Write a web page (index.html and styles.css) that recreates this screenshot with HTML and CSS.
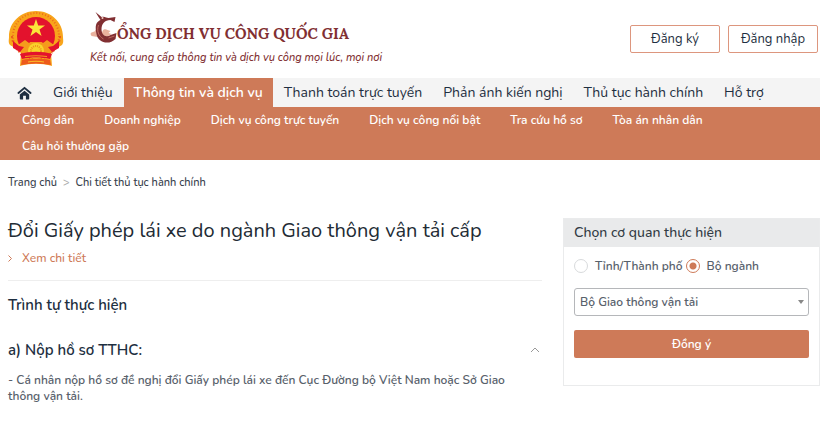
FILE: index.html
```html
<!DOCTYPE html>
<html lang="vi">
<head>
<meta charset="utf-8">
<meta name="viewport" content="width=device-width, initial-scale=1">
<title>Cổng Dịch vụ công Quốc gia</title>
<link rel="stylesheet" href="styles.css">
</head>
<body>
<header class="header">
  <a class="brand" href="#">
    <svg class="emblem" viewBox="0 0 56 58" aria-hidden="true">
      <path fill="#f8a51b" d="M28 1C13 1 1 12 1 27c0 3-1 5 1 8l5 3 6 5-1 13c10-3 22-3 32 0l-1-13 6-5 5-3c2-3 1-5 1-8C55 12 43 1 28 1z"/>
      <circle cx="28" cy="26" r="23" fill="none" stroke="#ee6a1c" stroke-width="2" stroke-dasharray="1 2"/>
      <path fill="none" stroke="#ed5c1c" stroke-width="2" stroke-dasharray="2 2" d="M4 26c0 8 5 14 12 19M52 26c0 8-5 14-12 19"/>
      <circle cx="28" cy="26" r="19" fill="#e3122d"/>
      <path fill="#f59b1c" d="M10 35l7-5 4 3 4-3h6l4 3 4-3 7 5-5 9H15z"/>
      <path fill="#e3122d" d="M17 28l5-3h12l5 3-3 4H20zM5 31l6 5 5 1-4 5-7-4zM51 31l-6 5-5 1 4 5 7-4z"/>
      <path fill="#fbe53a" d="M28 9l2.200 6.500H37l-5.500 4 2.100 6.500-5.600-4-5.600 4 2.100-6.500-5.500-4h6.800z"/>
      <circle cx="28" cy="41" r="8" fill="#f9d42b"/>
      <circle cx="28" cy="41" r="5" fill="none" stroke="#ee941d" stroke-width="2" stroke-dasharray="1 1"/>
      <path fill="#e3122d" d="M12 44c10-3 22-3 32 0l-2 5c-9-2-19-2-28 0z"/>
      <path fill="#f59b1c" d="M17 46c7-1 15-1 22 0v1c-7-1-15-1-22 0z"/>
      <path fill="#ed5a1c" d="M14 50c9-2 19-2 28 0l1 5c-10-2-20-2-30 0z"/>
      <path fill="none" stroke="#fbc02a" d="M20 52c5-1 11-1 16 0"/>
    </svg>
    <span class="brand-text">
      <span class="brand-name">
        <svg class="bird" viewBox="0 0 26 31" aria-hidden="true">
          <path fill="#e9b19d" d="M0 22c1-3 4-1 5-4 2-2 5 0 6 2l1 4-5 1-6-1zM12 19c2-3 4-1 5-1l3 1-2 2 3 1-5 3-5-2z"/>
          <path fill="#812f32" d="M5 0l6 5c3-1 5 1 7 1l7-1-1 5-4-2c-6 0-9 4-9 9 0 6 4 9 9 6l3-1 3-1-1 6c-7 7-18 3-19-5C4 13 6 10 10 8L8 5z"/>
          <path fill="none" stroke="#c0695f" d="M8 13c-2 6 0 11 5 14M18 26l6-2"/>
          <circle cx="12" cy="6" r="1" fill="#f1d2c7"/>
        </svg>
        <span>ỔNG DỊCH VỤ CÔNG QUỐC GIA</span>
      </span>
      <span class="slogan">Kết nối, cung cấp thông tin và dịch vụ công mọi lúc, mọi nơi</span>
    </span>
  </a>
  <div class="account">
    <button class="outline-button" type="button">Đăng ký</button>
    <button class="outline-button" type="button">Đăng nhập</button>
  </div>
</header>

<nav class="main-nav" aria-label="Menu chính">
  <a class="home" href="#" aria-label="Trang chủ">
    <svg viewBox="0 0 16 14" aria-hidden="true">
      <path fill="none" stroke="#1e2f41" stroke-width="2" stroke-linecap="round" stroke-linejoin="round" d="M1.500 7L8 1.500 14.500 7"/>
      <path fill="#1e2f41" d="M8 4.500l5 4V13q0 .8-.8.8H9.500V10h-3v3.800H3.800Q3 13.800 3 13V8.500z"/>
    </svg>
  </a>
  <a href="#">Giới thiệu</a>
  <a class="active" href="#" aria-current="page">Thông tin và dịch vụ</a>
  <a href="#">Thanh toán trực tuyến</a>
  <a href="#">Phản ánh kiến nghị</a>
  <a href="#">Thủ tục hành chính</a>
  <a href="#">Hỗ trợ</a>
</nav>

<nav class="sub-nav" aria-label="Thông tin và dịch vụ">
  <a href="#">Công dân</a>
  <a href="#">Doanh nghiệp</a>
  <a href="#">Dịch vụ công trực tuyến</a>
  <a href="#">Dịch vụ công nổi bật</a>
  <a href="#">Tra cứu hồ sơ</a>
  <a href="#">Tòa án nhân dân</a>
  <a href="#">Câu hỏi thường gặp</a>
</nav>

<nav class="breadcrumb" aria-label="Đường dẫn">
  <a href="#">Trang chủ</a>
  <span class="separator">&gt;</span>
  <span>Chi tiết thủ tục hành chính</span>
</nav>

<div class="layout">
  <main class="content">
    <h1>Đổi Giấy phép lái xe do ngành Giao thông vận tải cấp</h1>
    <a class="detail-link" href="#">
      <svg viewBox="0 0 4 7" aria-hidden="true"><path d="M.5.5l3 3-3 3"/></svg>
      Xem chi tiết
    </a>
    <h2>Trình tự thực hiện</h2>
    <section>
      <h3>
        <button class="toggle" type="button" aria-expanded="true">
          <span>a) Nộp hồ sơ TTHC:</span>
          <svg viewBox="0 0 10 6" aria-hidden="true"><path d="M1 5l4-4 4 4"/></svg>
        </button>
      </h3>
      <p>- Cá nhân nộp hồ sơ đề nghị đổi Giấy phép lái xe đến Cục Đường bộ Việt Nam hoặc Sở Giao thông vận tải.</p>
    </section>
  </main>

  <aside class="agency">
    <h2 id="agency-title">Chọn cơ quan thực hiện</h2>
    <form class="agency-form" aria-labelledby="agency-title">
      <div class="options">
        <label><input type="radio" name="level">Tỉnh/Thành phố</label>
        <label><input type="radio" name="level" checked>Bộ ngành</label>
      </div>
      <div class="select-box">
        <select aria-labelledby="agency-title">
          <option>Bộ Giao thông vận tải</option>
        </select>
      </div>
      <button class="submit" type="button">Đồng ý</button>
    </form>
  </aside>
</div>
</body>
</html>
```
FILE: styles.css
```css
:root {
  --accent: #ce7a58;
  --ink: #1e2f41;
  --text: #58616b;
}

* {
  box-sizing: border-box;
}

body {
  margin: 0;
  background: #fff;
  color: var(--ink);
  font-family: Nunito, Lato, "Noto Sans", sans-serif;
  font-size: 12px;
  font-weight: 600;
  line-height: 16px;
}

a {
  color: inherit;
  text-decoration: none;
}

h1, h2, h3, p {
  margin: 0;
  font-weight: inherit;
}

button, select {
  font: inherit;
  cursor: pointer;
}

.header {
  display: flex;
  justify-content: space-between;
  align-items: center;
  height: 78px;
  padding: 0 2px 0 8px;
}

.brand {
  display: flex;
  align-items: center;
  gap: 26px;
}

.emblem {
  width: 56px;
  height: 58px;
}

.brand-text {
  display: flex;
  flex-direction: column;
  gap: 7px;
  color: #812f32;
}

.brand-name {
  display: flex;
  align-items: flex-end;
  font-family: Lora, "Noto Serif", "Liberation Serif", serif;
  font-size: 15px;
  font-weight: 700;
  line-height: 18px;
}

.bird {
  width: 27px;
  height: 31px;
}

.slogan {
  font-size: 11px;
  font-style: italic;
  font-weight: 500;
}

.account {
  display: flex;
  gap: 8px;
}

.outline-button {
  width: 90px;
  height: 28px;
  padding: 0;
  border: 1px solid #dd967e;
  border-radius: 2px;
  background: #fff;
  color: var(--ink);
  font-size: 13px;
  font-weight: 400;
}

.main-nav {
  display: flex;
  padding-left: 7px;
  gap: 1px;
  background: #f4f4f4;
  font-size: 14px;
  font-weight: 400;
}

.main-nav a {
  padding: 0 10px;
  line-height: 29px;
}

.main-nav .home {
  display: flex;
  align-items: center;
}

.home svg {
  width: 15px;
  height: 14px;
}

.main-nav .active {
  background: var(--accent);
  color: #fff;
  font-weight: 600;
}

.sub-nav {
  display: flex;
  flex-wrap: wrap;
  column-gap: 30px;
  padding: 0 22px 1px;
  background: var(--accent);
  color: #fff;
}

.sub-nav a {
  line-height: 26px;
}

.breadcrumb {
  display: flex;
  gap: 6px;
  padding: 15px 8px 0;
  color: #36404b;
  font-size: 11px;
  font-weight: 500;
}

.separator {
  color: #aaa;
}

.layout {
  display: grid;
  grid-template-columns: minmax(0, 1fr) 257px;
  gap: 21px;
  align-items: start;
  padding: 27px 0 0 8px;
}

.content h1 {
  color: #222b34;
  font-size: 20px;
  font-weight: 400;
  line-height: 26px;
}

.detail-link {
  display: flex;
  align-items: center;
  gap: 10px;
  padding: 6px 0 14px;
  border-bottom: 1px solid #eee;
  color: var(--accent);
  font-weight: 500;
}

.detail-link svg {
  width: 4px;
  height: 7px;
  fill: none;
  stroke: currentColor;
}

.content h2 {
  padding-top: 14px;
  font-size: 15px;
  line-height: 20px;
}

.content h3 {
  padding-top: 25px;
}

.toggle {
  display: flex;
  justify-content: space-between;
  align-items: center;
  width: 100%;
  padding: 0 2px 0 0;
  border: 0;
  background: none;
  color: var(--ink);
  font-size: 15px;
  line-height: 20px;
}

.toggle svg {
  width: 10px;
  height: 6px;
  fill: none;
  stroke: #999;
}

.content p {
  padding: 12px 10px 0 0;
  color: var(--text);
}

.agency {
  border: 1px solid #eaebec;
  color: var(--text);
}

.agency h2 {
  padding: 0 10px;
  background: #e9eaeb;
  color: #333c45;
  font-size: 14px;
  font-weight: 500;
  line-height: 28px;
}

.agency-form {
  padding: 11px 10px 27px;
}

.options {
  display: flex;
  gap: 3px;
}

.options label {
  display: flex;
  align-items: center;
  gap: 7px;
}

.options input {
  appearance: none;
  width: 14px;
  height: 14px;
  margin: 0;
  border: 1px solid #d8dadc;
  border-radius: 50%;
}

.options input:checked {
  border-color: var(--accent);
  background: radial-gradient(circle, var(--accent) 3px, transparent 4px);
}

.select-box {
  position: relative;
  margin: 14px 0;
}

.select-box::after {
  content: "";
  position: absolute;
  top: 12px;
  right: 5px;
  border: 3px solid transparent;
  border-top: 4px solid #888;
  border-bottom: 0;
  pointer-events: none;
}

.select-box select {
  appearance: none;
  display: block;
  width: 100%;
  height: 28px;
  padding: 0 16px 0 5px;
  border: 1px solid #b5b7ba;
  border-radius: 3px;
  background: #fff;
  color: var(--text);
}

.submit {
  width: 100%;
  height: 28px;
  border: 0;
  border-radius: 2px;
  background: var(--accent);
  color: #fff;
}
```
